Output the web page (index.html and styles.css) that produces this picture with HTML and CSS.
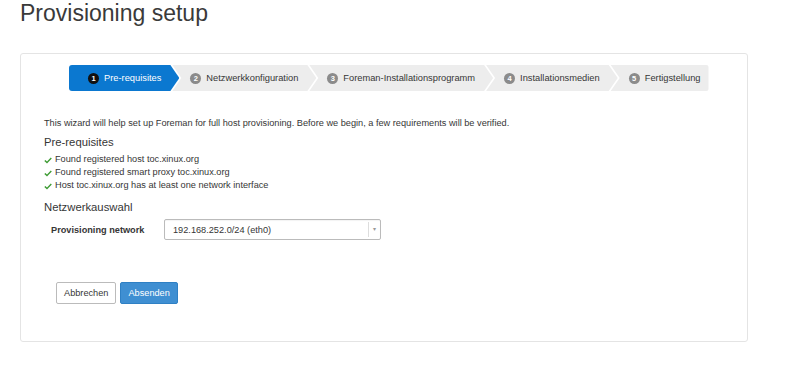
FILE: index.html
```html
<!DOCTYPE html>
<html lang="de">
<head>
    <meta charset="UTF-8">
    <meta name="viewport" content="width=device-width, initial-scale=1.0">
    <title>Provisioning setup</title>
    <link rel="stylesheet" href="styles.css">
</head>
<body>
    <div class="page">
        <h1 class="page-title">Provisioning setup</h1>

        <div class="panel">
            <ol class="steps">
                <li class="step active"><span class="badge">1</span>Pre-requisites</li>
                <li class="step"><span class="badge">2</span>Netzwerkkonfiguration</li>
                <li class="step"><span class="badge">3</span>Foreman-Installationsprogramm</li>
                <li class="step"><span class="badge">4</span>Installationsmedien</li>
                <li class="step last"><span class="badge">5</span>Fertigstellung</li>
            </ol>

            <p class="intro">This wizard will help set up Foreman for full host provisioning. Before we begin, a few requirements will be verified.</p>

            <h2 class="section-title">Pre-requisites</h2>
            <ul class="checks">
                <li><svg class="check" viewBox="0 0 8 7"><path d="M0.3 4 L1.4 3 L3 4.6 L6.8 0.6 L7.8 1.5 L3 6.4 Z"/></svg>Found registered host toc.xinux.org</li>
                <li><svg class="check" viewBox="0 0 8 7"><path d="M0.3 4 L1.4 3 L3 4.6 L6.8 0.6 L7.8 1.5 L3 6.4 Z"/></svg>Found registered smart proxy toc.xinux.org</li>
                <li><svg class="check" viewBox="0 0 8 7"><path d="M0.3 4 L1.4 3 L3 4.6 L6.8 0.6 L7.8 1.5 L3 6.4 Z"/></svg>Host toc.xinux.org has at least one network interface</li>
            </ul>

            <h2 class="section-title net">Netzwerkauswahl</h2>
            <form class="form-row">
                <label class="form-label" for="network">Provisioning network</label>
                <div class="select" id="network">
                    <span class="select-value">192.168.252.0/24 (eth0)</span>
                    <span class="select-caret">&#9662;</span>
                </div>
            </form>

            <div class="actions">
                <button class="btn" type="button">Abbrechen</button>
                <button class="btn btn-primary" type="button">Absenden</button>
            </div>
        </div>
    </div>
</body>
</html>
```

FILE: styles.css
```css
body {
    margin: 0;
    font-family: "Liberation Sans", Arial, sans-serif;
    font-size: 9.2px;
    color: #363636;
    background: #fff;
}
.page {
    padding: 0 20px;
}
.page-title {
    margin: 0;
    font-size: 23px;
    line-height: 26px;
    font-weight: normal;
    color: #3a3a3a;
}
.panel {
    width: 726px;
    margin-top: 27px;
    border: 1px solid #e4e4e4;
    border-radius: 3px;
    padding: 11px 0 37px;
}
.steps {
    display: flex;
    list-style: none;
    margin: 0 0 0 48px;
    padding: 0;
    height: 26px;
}
.step {
    display: flex;
    align-items: center;
    height: 26px;
    padding: 0 18px 0 18px;
    margin-left: -7px;
    background: #ededed;
    font-size: 9.3px;
    clip-path: polygon(0 0, calc(100% - 9px) 0, 100% 50%, calc(100% - 9px) 100%, 0 100%, 9px 50%);
    white-space: nowrap;
}
.step:first-child {
    margin-left: 0;
    padding-left: 19px;
    border-radius: 3px 0 0 3px;
    clip-path: polygon(0 0, calc(100% - 9px) 0, 100% 50%, calc(100% - 9px) 100%, 0 100%);
}
.step.last {
    padding-right: 8px;
    border-radius: 0 3px 3px 0;
    clip-path: polygon(0 0, 100% 0, 100% 100%, 0 100%, 9px 50%);
}
.step.active {
    background: #0b78d0;
    color: #fff;
}
.badge {
    display: inline-flex;
    align-items: center;
    justify-content: center;
    width: 11px;
    height: 11px;
    margin-right: 5px;
    border-radius: 50%;
    background: #8b8b8b;
    color: #fff;
    font-size: 7.5px;
    font-weight: bold;
}
.step.active .badge {
    background: #111;
}
.intro {
    margin: 25px 0 0 23px;
    line-height: 14px;
}
.section-title {
    margin: 3px 0 0 23px;
    font-size: 11.3px;
    line-height: 18px;
    font-weight: normal;
}
.section-title.net {
    margin-top: 6px;
}
.checks {
    list-style: none;
    margin: 2px 0 0 23px;
    padding: 0;
}
.checks li {
    display: flex;
    align-items: center;
    line-height: 13px;
}
.check {
    width: 8px;
    height: 7px;
    margin: 2px 3px 0 0;
    fill: #3f9c35;
}
.form-row {
    display: flex;
    align-items: center;
    margin: 3px 0 0 30px;
}
.form-label {
    width: 113px;
    font-weight: bold;
}
.select {
    display: flex;
    align-items: center;
    width: 215px;
    height: 19px;
    border: 1px solid #bbb;
    border-radius: 2px;
    box-shadow: inset 0 1px 1px rgba(0, 0, 0, 0.05);
}
.select-value {
    flex: 1;
    padding-left: 8px;
}
.select-caret {
    width: 11px;
    height: 15px;
    border-left: 1px solid #ddd;
    color: #999;
    font-size: 6px;
    line-height: 15px;
    text-align: center;
}
.actions {
    display: flex;
    gap: 4px;
    margin: 42px 0 0 35px;
}
.btn {
    height: 22px;
    padding: 0 7px;
    font-family: inherit;
    font-size: 9.2px;
    color: #363636;
    background: #fff;
    border: 1px solid #bbb;
    border-radius: 2px;
}
.btn-primary {
    color: #fff;
    background: #3f8fd2;
    border-color: #2f80c4;
}
```
